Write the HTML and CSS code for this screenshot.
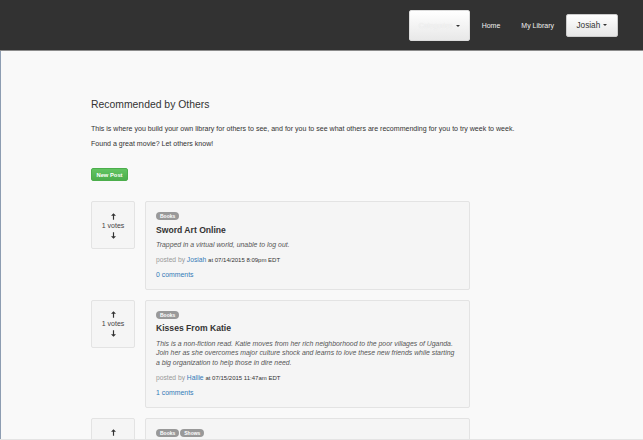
FILE: index.html
```html
<!DOCTYPE html>
<html>
<head>
<meta charset="utf-8">
<title>Recommended by Others</title>
<link rel="stylesheet" href="styles.css">
</head>
<body>
<header class="navbar">
  <button class="btn-cat">Categories <span class="caret"></span></button>
  <a class="nav-link home" href="#">Home</a>
  <a class="nav-link lib" href="#">My Library</a>
  <button class="btn-user">Josiah <span class="caret dark"></span></button>
</header>
<main class="page">
  <h3 class="title">Recommended by Others</h3>
  <p class="lead l1">This is where you build your own library for others to see, and for you to see what others are recommending for you to try week to week.</p>
  <p class="lead l2">Found a great movie? Let others know!</p>
  <button class="btn-new">New Post</button>

  <div class="posts">
    <div class="post">
      <div class="votes">
        <svg class="arrow" viewBox="0 0 6 8" width="6" height="8"><path d="M3 0 L6 3.2 H3.7 V8 H2.3 V3.2 H0 Z" fill="#333"/></svg>
        <span class="count">1 votes</span>
        <svg class="arrow" viewBox="0 0 6 8" width="6" height="8"><path d="M3 8 L6 4.8 H3.7 V0 H2.3 V4.8 H0 Z" fill="#333"/></svg>
      </div>
      <div class="card">
        <div class="tags"><span class="tag">Books</span></div>
        <h4 class="post-title">Sword Art Online</h4>
        <p class="desc">Trapped in a virtual world, unable to log out.</p>
        <p class="meta">posted by <a href="#">Josiah</a> <small>at 07/14/2015 8:09pm EDT</small></p>
        <a class="comments" href="#">0 comments</a>
      </div>
    </div>

    <div class="post">
      <div class="votes">
        <svg class="arrow" viewBox="0 0 6 8" width="6" height="8"><path d="M3 0 L6 3.2 H3.7 V8 H2.3 V3.2 H0 Z" fill="#333"/></svg>
        <span class="count">1 votes</span>
        <svg class="arrow" viewBox="0 0 6 8" width="6" height="8"><path d="M3 8 L6 4.8 H3.7 V0 H2.3 V4.8 H0 Z" fill="#333"/></svg>
      </div>
      <div class="card">
        <div class="tags"><span class="tag">Books</span></div>
        <h4 class="post-title">Kisses From Katie</h4>
        <p class="desc">This is a non-fiction read. Katie moves from her rich neighborhood to the poor villages of Uganda. Join her as she overcomes major culture shock and learns to love these new friends while starting a big organization to help those in dire need.</p>
        <p class="meta">posted by <a href="#">Hallie</a> <small>at 07/15/2015 11:47am EDT</small></p>
        <a class="comments" href="#">1 comments</a>
      </div>
    </div>

    <div class="post">
      <div class="votes">
        <svg class="arrow" viewBox="0 0 6 8" width="6" height="8"><path d="M3 0 L6 3.2 H3.7 V8 H2.3 V3.2 H0 Z" fill="#333"/></svg>
      </div>
      <div class="card">
        <div class="tags"><span class="tag">Books</span><span class="tag">Shows</span></div>
      </div>
    </div>
  </div>
</main>
<div class="bottom-line"></div>
</body>
</html>
```
FILE: styles.css
```css
html, body {
  margin: 0;
  padding: 0;
  height: 100%;
  overflow: hidden;
}
body {
  background: #f9f9f9;
  font-family: "Liberation Sans", Arial, sans-serif;
  color: #333;
}
.navbar {
  height: 51px;
  box-sizing: border-box;
  background: #323232;
  border-bottom: 1px solid #8c8c8c;
  display: flex;
  align-items: center;
  justify-content: flex-end;
  padding-right: 25px;
}
.btn-cat {
  width: 61px;
  height: 31px;
  margin-right: 12px;
  border: 1px solid #ddd;
  border-radius: 2px;
  background: linear-gradient(#ffffff, #e8e8e8);
  color: #f4f4f4;
  text-shadow: 0 0 1px #ddd;
  font: 7px "Liberation Sans", Arial, sans-serif;
  padding: 0;
}
.caret {
  display: inline-block;
  width: 0;
  height: 0;
  border-left: 2px solid transparent;
  border-right: 2px solid transparent;
  border-top: 2px solid #333;
  vertical-align: middle;
  margin-left: 1px;
}
.nav-link {
  color: #f0f0f0;
  text-decoration: none;
  font-size: 7px;
}
.nav-link:visited { color: #f0f0f0; }
.home { margin-right: 21px; }
.lib { margin-right: 12px; }
.btn-user {
  width: 52px;
  height: 23px;
  border: 1px solid #ccc;
  border-radius: 2px;
  background: linear-gradient(#ffffff, #e6e6e6);
  color: #333;
  font: 8.2px "Liberation Sans", Arial, sans-serif;
  padding: 0;
}
.page {
  border-left: 1px solid #8d9db2;
  min-height: 389px;
  padding: 48px 0 0 90px;
}
.title {
  margin: 0;
  font-size: 10.4px;
  line-height: 12px;
  font-weight: normal;
  color: #333;
}
.lead {
  margin: 0;
  font-size: 7.05px;
  line-height: 10px;
  color: #333;
}
.l1 { margin-top: 13px; }
.l2 { margin-top: 5px; }
.btn-new {
  display: block;
  margin-top: 19px;
  width: 37px;
  height: 13px;
  padding: 0;
  border: 1px solid #4cae4c;
  border-radius: 2px;
  background: linear-gradient(#62c462, #4cae4c);
  color: #fff;
  font: bold 5.8px "Liberation Sans", Arial, sans-serif;
}
.posts {
  margin-top: 20px;
  display: flex;
  flex-direction: column;
  gap: 10px;
}
.post {
  display: flex;
  align-items: flex-start;
  gap: 10px;
}
.votes {
  width: 44px;
  height: 48px;
  box-sizing: border-box;
  background: #f5f5f5;
  border: 1px solid #e3e3e3;
  border-radius: 2px;
  display: flex;
  flex-direction: column;
  align-items: center;
  justify-content: center;
  gap: 2px;
  padding-top: 1px;
}
.post:last-child .votes {
  justify-content: flex-start;
  padding-top: 10px;
}
.count {
  font-size: 7px;
  line-height: 8px;
  color: #444;
}
.arrow { display: block; width: 5px; height: 7px; }
.card {
  width: 325px;
  box-sizing: border-box;
  background: #f5f5f5;
  border: 1px solid #e3e3e3;
  border-radius: 2px;
  padding: 10px 10px 9px;
}
.post:last-child .card { height: 48px; }
.tags { display: flex; gap: 1px; }
.tag {
  display: inline-block;
  background: #999;
  color: #fff;
  font-size: 5px;
  font-weight: bold;
  line-height: 8px;
  height: 8px;
  padding: 0 4px;
  border-radius: 4px;
}
.post-title {
  margin: 4.5px 0 0;
  font-size: 8.6px;
  line-height: 10px;
  font-weight: bold;
  color: #333;
}
.desc {
  margin: 5.5px 0 0;
  font-size: 6.9px;
  line-height: 9.7px;
  font-style: italic;
  color: #555;
}
.meta {
  margin: 5px 0 0;
  font-size: 6.7px;
  line-height: 10px;
  color: #999;
}
.meta a { color: #337ab7; text-decoration: none; }
.meta small { font-size: 6px; color: #333; }
.comments {
  display: block;
  margin-top: 5px;
  font-size: 6.9px;
  line-height: 10px;
  color: #337ab7;
  text-decoration: none;
}
.bottom-line {
  position: fixed;
  left: 0;
  right: 0;
  bottom: 0;
  height: 1px;
  background: #e4e4e4;
}
```
